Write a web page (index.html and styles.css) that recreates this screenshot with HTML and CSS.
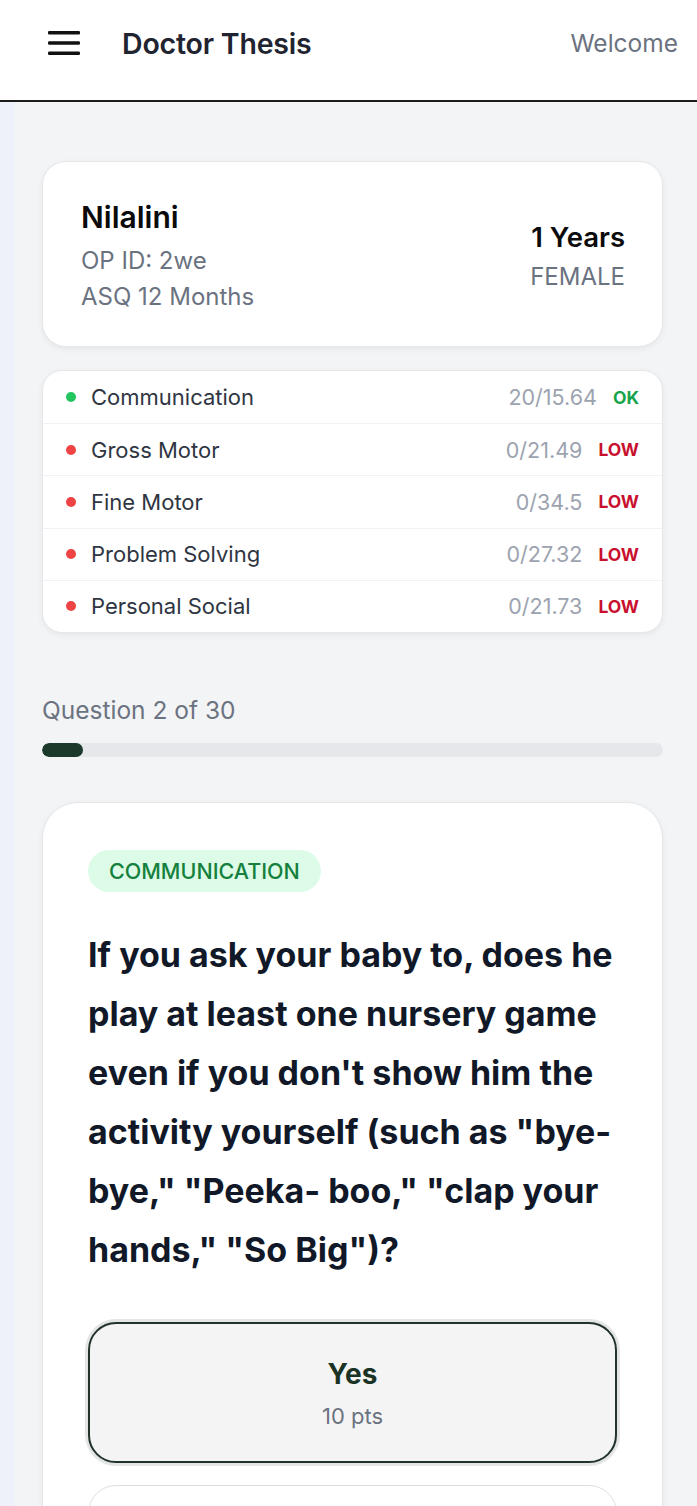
FILE: index.html
```html
<!DOCTYPE html>
<html lang="en">

<head>
    <meta charset="UTF-8" />
    <meta name="viewport" content="width=device-width, initial-scale=1.0" />
    <title>Doctor Thesis</title>
    <link rel="stylesheet" href="styles.css">
</head>

<body>
    <header class="topbar">
        <button class="menu-btn" aria-label="Menu">
            <svg width="32" height="26" viewBox="0 0 32 26">
                <rect x="0" y="1" width="32" height="3.4" rx="1.2" fill="#111" />
                <rect x="0" y="11.3" width="32" height="3.4" rx="1.2" fill="#111" />
                <rect x="0" y="21.6" width="32" height="3.4" rx="1.2" fill="#111" />
            </svg>
        </button>
        <h1 class="brand">Doctor Thesis</h1>
        <span class="welcome">Welcome</span>
    </header>

    <main class="content">
        <section class="card patient">
            <div class="patient-main">
                <h2 class="patient-name">Nilalini</h2>
                <p class="muted">OP ID: 2we</p>
                <p class="muted">ASQ 12 Months</p>
            </div>
            <div class="patient-side">
                <p class="age">1 Years</p>
                <p class="muted">FEMALE</p>
            </div>
        </section>

        <section class="card domains">
            <div class="domain-row">
                <span class="dot ok"></span>
                <span class="domain-name">Communication</span>
                <span class="score">20/15.64</span>
                <span class="status ok">OK</span>
            </div>
            <div class="domain-row">
                <span class="dot low"></span>
                <span class="domain-name">Gross Motor</span>
                <span class="score">0/21.49</span>
                <span class="status low">LOW</span>
            </div>
            <div class="domain-row">
                <span class="dot low"></span>
                <span class="domain-name">Fine Motor</span>
                <span class="score">0/34.5</span>
                <span class="status low">LOW</span>
            </div>
            <div class="domain-row">
                <span class="dot low"></span>
                <span class="domain-name">Problem Solving</span>
                <span class="score">0/27.32</span>
                <span class="status low">LOW</span>
            </div>
            <div class="domain-row">
                <span class="dot low"></span>
                <span class="domain-name">Personal Social</span>
                <span class="score">0/21.73</span>
                <span class="status low">LOW</span>
            </div>
        </section>

        <p class="progress-label">Question 2 of 30</p>
        <div class="progress">
            <div class="progress-fill" style="width: 6.67%;"></div>
        </div>

        <section class="card question">
            <span class="badge">COMMUNICATION</span>
            <p class="question-text">If you ask your baby to, does he play at least one nursery game even if you don't show him the activity yourself (such as "bye- bye," "Peeka- boo," "clap your hands," "So Big")?</p>

            <div class="options">
                <button class="option selected">
                    <span class="option-title">Yes</span>
                    <span class="option-pts">10 pts</span>
                </button>
                <button class="option">
                    <span class="option-title">Sometimes</span>
                    <span class="option-pts">5 pts</span>
                </button>
                <button class="option">
                    <span class="option-title">Not Yet</span>
                    <span class="option-pts">0 pts</span>
                </button>
            </div>
        </section>
    </main>
</body>

</html>
```

FILE: styles.css
```css
* {
    box-sizing: border-box;
}

body {
    margin: 0;
    font-family: Inter, "Noto Sans", Arial, sans-serif;
    background: #f3f4f6;
    color: #111827;
}

p,
h1,
h2 {
    margin: 0;
}

.topbar {
    display: flex;
    align-items: center;
    height: 102px;
    padding: 0 19px 14px 48px;
    background: #fff;
    border-bottom: 2px solid #1c1c1c;
}

.menu-btn {
    border: none;
    background: none;
    padding: 0;
    margin-right: 42px;
    display: flex;
}

.brand {
    font-size: 28.5px;
    font-weight: 600;
    color: #1f2430;
    letter-spacing: -0.2px;
}

.welcome {
    margin-left: auto;
    font-size: 24.5px;
    color: #6b7280;
}

.content {
    border-left: 14px solid #eef1f9;
    padding: 59px 34px 40px 28px;
}

.card {
    background: #fff;
    border: 1px solid #e5e7eb;
    border-radius: 24px;
    box-shadow: 0 2px 6px rgba(0, 0, 0, 0.06);
}

.muted {
    color: #6b7280;
    font-size: 24px;
    line-height: 36px;
}

.patient {
    display: flex;
    align-items: center;
    justify-content: space-between;
    padding: 37px 37px 31px 38px;
}

.patient-name {
    font-size: 30px;
    font-weight: 600;
    line-height: 36px;
    margin-bottom: 8px;
    color: #0b0b0b;
}

.patient-side {
    text-align: right;
}

.patient-side .muted {
    line-height: 34px;
    margin-top: 6px;
}

.age {
    font-size: 27.5px;
    font-weight: 600;
    line-height: 34px;
    color: #0b0b0b;
}

.domains {
    margin-top: 23px;
    border-radius: 20px;
    overflow: hidden;
}

.domain-row {
    display: flex;
    align-items: center;
    height: 52.2px;
    padding: 0 23px 0 23px;
    border-top: 1px solid #f1f2f4;
}

.domain-row:first-child {
    border-top: none;
}

.dot {
    width: 10px;
    height: 10px;
    border-radius: 50%;
    margin-right: 15px;
}

.dot.ok {
    background: #22c55e;
}

.dot.low {
    background: #ef4444;
}

.domain-name {
    font-size: 22px;
    color: #2f3542;
}

.score {
    margin-left: auto;
    font-size: 21.5px;
    color: #9ca3af;
}

.status {
    margin-left: 16px;
    font-size: 17.5px;
    font-weight: 700;
}

.status.ok {
    color: #16a34a;
}

.status.low {
    color: #c8102e;
}

.progress-label {
    margin-top: 61px;
    font-size: 24.5px;
    line-height: 32px;
    color: #6b7280;
}

.progress {
    margin-top: 17px;
    height: 14px;
    border-radius: 7px;
    background: #e5e7eb;
    overflow: hidden;
}

.progress-fill {
    height: 100%;
    border-radius: 7px;
    background: #1c3a2b;
}

.question {
    margin-top: 45px;
    border-radius: 36px;
    padding: 47px 45px 45px 45px;
}

.badge {
    display: inline-block;
    height: 42px;
    line-height: 42px;
    padding: 0 21px;
    border-radius: 21px;
    background: #dcfce7;
    color: #15803d;
    font-size: 21.5px;
    font-weight: 500;
}

.question-text {
    margin-top: 33px;
    font-size: 34px;
    font-weight: 700;
    line-height: 59px;
    color: #111827;
}

.options {
    margin-top: 43px;
    display: flex;
    flex-direction: column;
    gap: 22px;
}

.option {
    display: flex;
    flex-direction: column;
    align-items: center;
    height: 141px;
    padding: 33px 0 0;
    border: 1px solid #dedede;
    border-radius: 28px;
    background: #fff;
    font-family: inherit;
}

.option.selected {
    border: 2px solid #22332a;
    background: #f4f4f4;
    box-shadow: 0 0 0 3px rgba(34, 51, 42, 0.12);
}

.option-title {
    font-size: 28px;
    font-weight: 700;
    line-height: 34px;
    color: #1a3324;
}

.option-pts {
    margin-top: 11px;
    font-size: 22px;
    line-height: 28px;
    color: #6b7280;
}
```
